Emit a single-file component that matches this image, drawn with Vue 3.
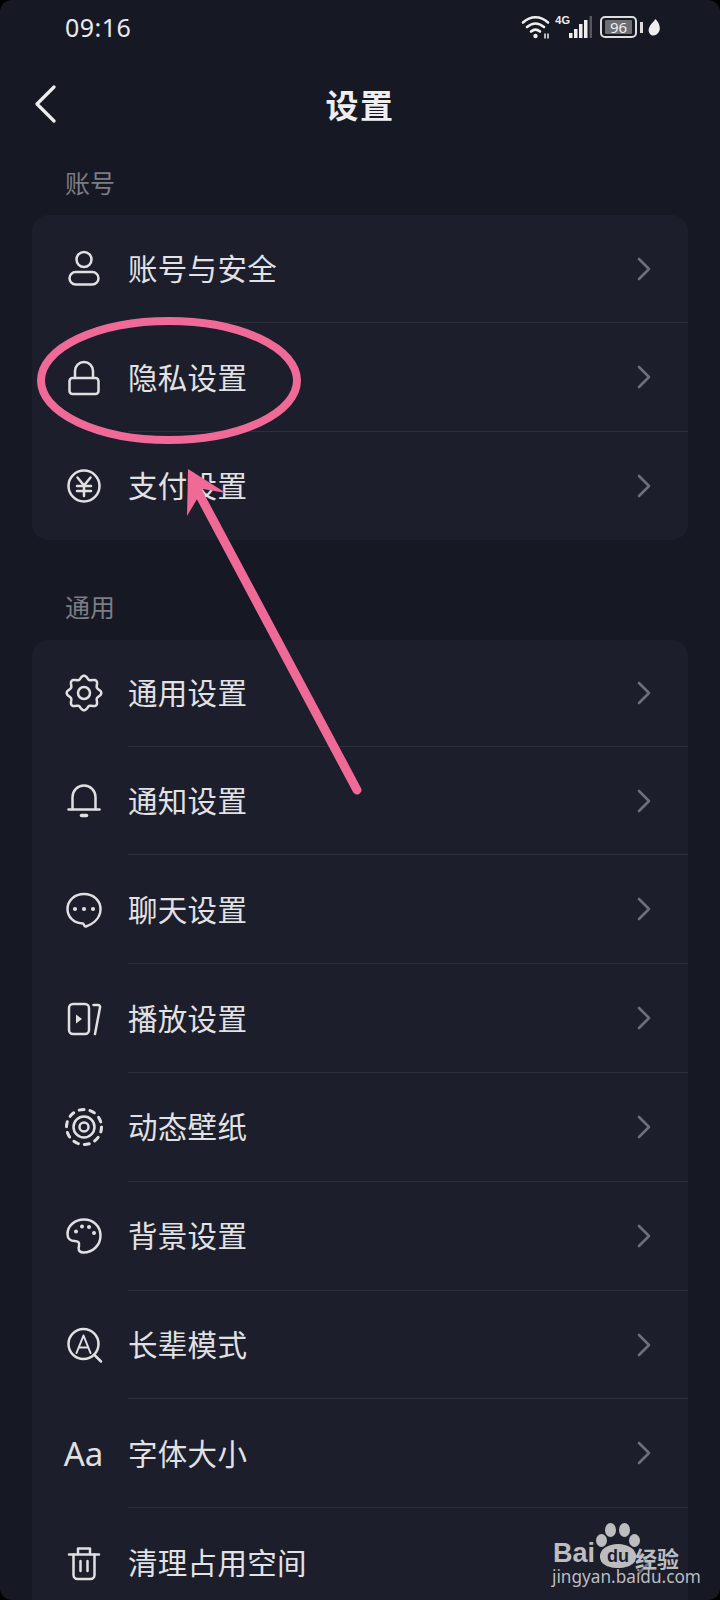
<template>
  <div class="page">
    <div class="status-bar">
      <span class="time">09:16</span>
      <div class="status-icons">
        <svg class="wifi" width="30" height="24" viewBox="0 0 30 24" fill="none" stroke="#eee" stroke-width="2.6" stroke-linecap="round">
          <path d="M2 7.5C9.5 0.5 19.5 0.5 27 7.5" />
          <path d="M6 12C11.5 7.500 17.5 7.500 23 12" />
          <path d="M10 16.500C13 14 16 14 19 16.500" />
          <circle cx="14.500" cy="21" r="2.200" fill="#eee" stroke="none" />
          <path d="M24 19v4M27 19v4" stroke-width="1.500" />
        </svg>
        <span class="net">4G</span>
        <svg class="signal" width="23" height="22" viewBox="0 0 23 22">
          <rect x="0" y="17" width="3.500" height="5" fill="#eee" />
          <rect x="5" y="13" width="3.500" height="9" fill="#eee" />
          <rect x="10" y="8" width="3.500" height="14" fill="#eee" />
          <rect x="15" y="4" width="3.500" height="18" fill="#eee" />
          <rect x="20.500" y="0" width="2.500" height="22" fill="#55565e" />
        </svg>
        <div class="battery"><span>96</span></div>
        <i class="battery-cap"></i>
        <svg class="leaf" width="12" height="17" viewBox="0 0 12 17">
          <path d="M7.500 0C11 3.500 12.500 8 11.500 11.500C10.500 15 7 17 4 16.500C1 15 0 12 1 9C2 5.500 5.500 3 7.500 0Z" fill="#eee" />
        </svg>
      </div>
    </div>

    <header class="nav">
      <svg class="back" width="24" height="38" viewBox="0 0 24 38" fill="none" stroke="#eee" stroke-width="3.200" stroke-linecap="round" stroke-linejoin="round">
        <path d="M20 2L3 19L20 36" />
      </svg>
      <h1>设置</h1>
    </header>

    <p class="section-title first">账号</p>
    <section class="card">
      <div v-for="item in accountItems" :key="item.label" class="row">
        <div class="row-icon" v-html="item.icon"></div>
        <div class="row-body">
          <span class="label">{{ item.label }}</span>
          <svg class="chevron" width="14" height="24" viewBox="0 0 14 24" fill="none" stroke="#6e7079" stroke-width="2.600" stroke-linecap="round" stroke-linejoin="round">
            <path d="M2 2L12 12L2 22" />
          </svg>
        </div>
      </div>
    </section>

    <p class="section-title">通用</p>
    <section class="card general">
      <div v-for="item in generalItems" :key="item.label" class="row">
        <div class="row-icon" v-html="item.icon"></div>
        <div class="row-body">
          <span class="label">{{ item.label }}</span>
          <svg class="chevron" width="14" height="24" viewBox="0 0 14 24" fill="none" stroke="#6e7079" stroke-width="2.600" stroke-linecap="round" stroke-linejoin="round">
            <path d="M2 2L12 12L2 22" />
          </svg>
        </div>
      </div>
    </section>

    <!-- annotation drawn on top of the screenshot -->
    <svg class="markup" width="720" height="830" viewBox="0 0 720 830" fill="none">
      <ellipse cx="169" cy="380.500" rx="128" ry="59.500" stroke="#f06a98" stroke-width="8" />
      <path d="M357 790L197 490" stroke="#f06a98" stroke-width="9" stroke-linecap="round" />
      <path d="M188 469L226 493L203 489L187 516Z" fill="#f06a98" />
    </svg>

    <div class="watermark">
      <div class="paw">
        <i class="toe t1"></i><i class="toe t2"></i><i class="toe t3"></i><i class="toe t4"></i>
        <span class="pad">du</span>
      </div>
      <b class="bai">Bai</b>
      <em class="jy">经验</em>
      <div class="url">jingyan.baidu.com</div>
    </div>
  </div>
</template>

<script setup>
const stroke = 'fill="none" stroke="#e0e0e3" stroke-width="2.500" stroke-linecap="round" stroke-linejoin="round"'
const svg = (body) => `<svg width="40" height="40" viewBox="0 0 40 40" ${stroke}>${body}</svg>`
const dot = (cx, cy, r) => `<circle cx="${cx}" cy="${cy}" r="${r}" fill="#e0e0e3" stroke="none" />`

// 8 scalloped lobes round the gear
const gearPoints = Array.from({ length: 144 }, (_, i) => {
  const t = (i / 144) * Math.PI * 2
  const r = 15.6 + 1.7 * Math.cos(8 * t)
  return `${(20 + r * Math.sin(t)).toFixed(2)},${(20 - r * Math.cos(t)).toFixed(2)}`
}).join(' ')

const accountItems = [
  {
    label: '账号与安全',
    icon: svg('<circle cx="20" cy="10.500" r="7.500" /><rect x="5.500" y="23" width="29" height="12.500" rx="6.200" />')
  },
  {
    label: '隐私设置',
    icon: svg('<path d="M11 20v-7a9 9 0 0 1 18 0v7" /><rect x="5.500" y="20" width="29" height="16" rx="3" />')
  },
  {
    label: '支付设置',
    icon: svg('<circle cx="20" cy="20" r="15.500" /><path d="M13.500 11.500L20 19.500L26.500 11.500M13 20h14M13 25h14M20 19.500V30" />')
  }
]

const generalItems = [
  {
    label: '通用设置',
    icon: svg(`<polygon points="${gearPoints}" /><circle cx="20" cy="20" r="6" />`)
  },
  {
    label: '通知设置',
    icon: svg('<path d="M8.500 28V16a11.500 11.500 0 0 1 23 0V28" /><path d="M4.500 28.500H35.500" /><path d="M17.500 34.500h5" stroke-width="3.600" />')
  },
  {
    label: '聊天设置',
    icon: svg(`<path d="M20 4C10.500 4 3.500 10.500 3.500 19C3.500 27.500 10.500 33.500 19 33.500C20 33.500 20 37 22 36.500C26 35 36.500 30 36.500 19C36.500 10.500 29.500 4 20 4Z" />${dot(11, 19, 2.1)}${dot(20, 19, 2.1)}${dot(29, 19, 2.1)}`)
  },
  {
    label: '播放设置',
    icon: svg('<rect x="5" y="5" width="20" height="30" rx="4" /><path d="M12 15.500L18 20L12 24.500Z" fill="#e0e0e3" stroke="none" /><path d="M29.500 6h4.500a2 2 0 0 1 2 2.500L31 35" />')
  },
  {
    label: '动态壁纸',
    icon: svg('<circle cx="20" cy="20" r="17.500" stroke-width="3" stroke-dasharray="5 6" /><circle cx="20" cy="20" r="10.500" /><circle cx="20" cy="20" r="4.500" />')
  },
  {
    label: '背景设置',
    icon: svg(`<path d="M20 3.500C29.500 3.500 36.500 10.500 36.500 19.500C36.500 29.500 28.500 36.500 19.500 36.500C14.500 36.500 14 33 15 30C16 26.500 14 25 10.500 25C7 25 3.500 23 3.500 18C3.500 10 10.500 3.500 20 3.500Z" />${dot(12, 15.5, 2)}${dot(18, 10.5, 2)}${dot(25, 11, 2)}${dot(30, 17, 2)}`)
  },
  {
    label: '长辈模式',
    icon: svg('<circle cx="19.500" cy="19" r="15" /><path d="M30.500 30L37 36.500" /><path d="M12.500 28L19.500 10.500L26.500 28M15 22.500H24" stroke-width="2" />')
  },
  {
    label: '字体大小',
    icon: '<span class="aa">Aa</span>'
  },
  {
    label: '清理占用空间',
    icon: svg('<path d="M5 11.500H35M14 11V5.500h12V11" /><path d="M9.500 11.500V32a4 4 0 0 0 4 4h13a4 4 0 0 0 4-4V11.500" /><path d="M16.500 18v10M23.500 18v10" />')
  }
]
</script>

<style scoped>
.page {
  position: relative;
  width: 720px;
  height: 1600px;
  overflow: hidden;
  background: #161823;
  border-radius: 12px;
  font-family: "Noto Sans CJK SC", "Noto Sans", sans-serif;
  color: #e6e6e8;
}

.status-bar {
  height: 56px;
  box-sizing: border-box;
  padding: 9px 60px 0 65px;
  display: flex;
  justify-content: space-between;
  align-items: flex-start;
}

.time {
  font-family: "Noto Sans", sans-serif;
  font-size: 25px;
  line-height: 36px;
  letter-spacing: 0.5px;
  color: #e9e9ec;
}

.status-icons {
  display: flex;
  align-items: center;
  height: 36px;
  margin-top: 0;
}

.net {
  font-family: "Liberation Sans", sans-serif;
  font-size: 11px;
  font-weight: 700;
  margin: -14px 0 0 4px;
  color: #eee;
}

.signal {
  margin-left: -1px;
}

.battery {
  margin-left: 8px;
  width: 27px;
  height: 14px;
  padding: 2px 3px;
  border: 2px solid #ddd;
  border-radius: 5px;
  box-sizing: content-box;
  display: flex;
}

.battery span {
  flex: 1;
  background: #6d6e72;
  border-radius: 1px;
  font-family: "Noto Sans", sans-serif;
  font-size: 15px;
  line-height: 14px;
  text-align: center;
  color: #eee;
}

.battery-cap {
  width: 3px;
  height: 11px;
  margin-left: 3px;
  background: #ddd;
}

.leaf {
  margin-left: 5px;
}

.nav {
  position: relative;
  height: 96px;
  display: flex;
  align-items: center;
  justify-content: center;
}

.nav h1 {
  margin: 0;
  font-size: 33px;
  font-weight: 700;
  letter-spacing: 1.500px;
  color: #eeeef0;
}

.back {
  position: absolute;
  left: 34px;
  top: 29px;
}

.section-title {
  margin: 0;
  padding: 49px 0 0 65px;
  height: 100px;
  box-sizing: border-box;
  font-size: 25px;
  line-height: 34px;
  color: #7b7d85;
}

.section-title.first {
  padding-top: 13px;
  height: 63px;
}

.card {
  margin: 0 32px;
  background: #1c1e2b;
  border-radius: 16px;
}

.row {
  height: 108.400px;
  display: flex;
}

.general .row {
  height: 108.800px;
}

.general .row:first-child {
  height: 106.500px;
}

.row-icon {
  width: 96px;
  display: flex;
  align-items: center;
  justify-content: center;
  padding-left: 7px;
  box-sizing: border-box;
}

.row-icon :deep(svg) {
  display: block;
}

.row-icon :deep(.aa) {
  font-family: "Noto Sans", sans-serif;
  font-size: 33px;
  color: #e0e0e3;
}

.row-body {
  flex: 1;
  display: flex;
  align-items: center;
  justify-content: space-between;
  padding-right: 37px;
  border-bottom: 1px solid #2c2e3a;
}

.row:last-child .row-body {
  border-bottom: none;
}

.label {
  padding-bottom: 3px;
  font-size: 29.500px;
  letter-spacing: 0.300px;
  color: #e2e2e4;
}

.markup {
  position: absolute;
  left: 0;
  top: 0;
  pointer-events: none;
}

/* baidu mark in the bottom right corner */
.watermark {
  position: absolute;
  left: 552px;
  top: 1522px;
  width: 132px;
  height: 68px;
  color: #bdbdc0;
}

.paw {
  position: absolute;
  left: 44px;
  top: 0;
  width: 44px;
  height: 46px;
}

.toe {
  position: absolute;
  background: #bdbdc0;
  border-radius: 50%;
}

.t1 { left: 0; top: 12px; width: 11px; height: 13px; }
.t2 { left: 9px; top: 1px; width: 11px; height: 14px; }
.t3 { left: 23px; top: 1px; width: 11px; height: 14px; }
.t4 { left: 33px; top: 12px; width: 11px; height: 13px; }

.pad {
  position: absolute;
  left: 4px;
  top: 22px;
  width: 36px;
  height: 24px;
  background: #bdbdc0;
  border-radius: 50% 50% 45% 45%;
  font-family: "Liberation Sans", sans-serif;
  font-size: 18px;
  font-weight: 700;
  line-height: 25px;
  text-align: center;
  color: #1c1e2b;
}

.bai {
  position: absolute;
  left: 1px;
  top: 17px;
  font-family: "Liberation Sans", sans-serif;
  font-size: 27px;
  font-weight: 700;
  line-height: 28px;
}

.jy {
  position: absolute;
  left: 83px;
  top: 21px;
  font-style: normal;
  font-size: 22px;
  font-weight: 700;
  line-height: 28px;
  white-space: nowrap;
}

.url {
  position: absolute;
  left: 0;
  top: 44px;
  font-family: "Noto Sans", sans-serif;
  font-size: 17.200px;
  line-height: 22px;
  white-space: nowrap;
}
</style>

<style>
html,
body {
  background: #000;
}
</style>
